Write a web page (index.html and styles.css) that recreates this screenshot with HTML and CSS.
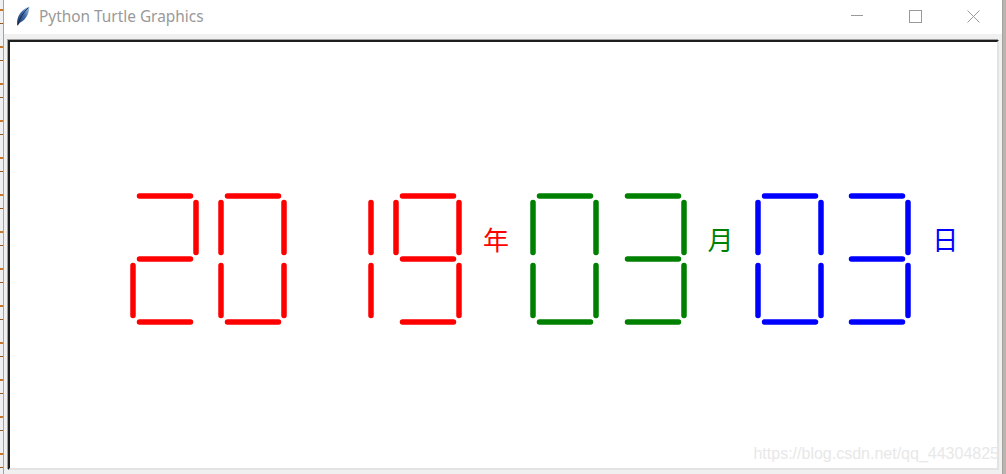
FILE: index.html
```html
<!DOCTYPE html>
<html>
<head>
<meta charset="utf-8">
<title>Python Turtle Graphics</title>
<link rel="stylesheet" href="styles.css">
</head>
<body>
<div class="screen">
  <div class="desk-left"></div>
  <div class="window">
    <div class="titlebar">
      <svg class="feather" width="14" height="20" viewBox="0 0 14 20">
        <defs>
          <linearGradient id="fg" x1="0" y1="1" x2="1" y2="0">
            <stop offset="0" stop-color="#1c3560"/>
            <stop offset="0.55" stop-color="#3d6aa8"/>
            <stop offset="1" stop-color="#a9c6ea"/>
          </linearGradient>
        </defs>
        <path d="M1.4 19.6 C0.2 12.5 3.6 4.2 13.4 0.6 C13.2 7.2 10.4 13.6 4.2 16.6 Z" fill="url(#fg)"/>
        <path d="M1.6 19.3 C3.8 12 7.2 6.2 12.2 1.8" stroke="#0c1a33" stroke-width="0.8" fill="none"/>
      </svg>
      <span class="title">Python Turtle Graphics</span>
      <div class="controls">
        <div class="btn"><svg width="12" height="12" viewBox="0 0 12 12"><path d="M0 5.5 H12" stroke="#999" stroke-width="1"/></svg></div>
        <div class="btn"><svg width="13" height="13" viewBox="0 0 13 13"><rect x="0.5" y="0.5" width="12" height="12" fill="none" stroke="#999" stroke-width="1"/></svg></div>
        <div class="btn"><svg width="13" height="13" viewBox="0 0 13 13"><path d="M0.5 0.5 L12.5 12.5 M12.5 0.5 L0.5 12.5" stroke="#999" stroke-width="1"/></svg></div>
      </div>
    </div>
    <div class="client">
      <div class="canvas">
        <div class="clock">
          <!-- 2 -->
          <svg class="digit red" viewBox="-3 -3 69 132">
            <path d="M6.5 0 H57.5 M63 6.5 V56.5 M6.5 63 H57.5 M0 69.5 V119.5 M6.5 126 H57.5"/>
          </svg>
          <!-- 0 -->
          <svg class="digit red" viewBox="-3 -3 69 132">
            <path d="M6.5 0 H57.5 M63 6.5 V56.5 M63 69.5 V119.5 M6.5 126 H57.5 M0 69.5 V119.5 M0 6.5 V56.5"/>
          </svg>
          <!-- 1 -->
          <svg class="digit red" viewBox="-3 -3 69 132">
            <path d="M63 6.5 V56.5 M63 69.5 V119.5"/>
          </svg>
          <!-- 9 -->
          <svg class="digit red" viewBox="-3 -3 69 132">
            <path d="M6.5 0 H57.5 M63 6.5 V56.5 M63 69.5 V119.5 M6.5 126 H57.5 M0 6.5 V56.5 M6.5 63 H57.5"/>
          </svg>
          <span class="char c-red">年</span>
          <!-- 0 -->
          <svg class="digit green" viewBox="-3 -3 69 132">
            <path d="M6.5 0 H57.5 M63 6.5 V56.5 M63 69.5 V119.5 M6.5 126 H57.5 M0 69.5 V119.5 M0 6.5 V56.5"/>
          </svg>
          <!-- 3 -->
          <svg class="digit green" viewBox="-3 -3 69 132">
            <path d="M6.5 0 H57.5 M63 6.5 V56.5 M6.5 63 H57.5 M63 69.5 V119.5 M6.5 126 H57.5"/>
          </svg>
          <span class="char c-green">月</span>
          <!-- 0 -->
          <svg class="digit blue" viewBox="-3 -3 69 132">
            <path d="M6.5 0 H57.5 M63 6.5 V56.5 M63 69.5 V119.5 M6.5 126 H57.5 M0 69.5 V119.5 M0 6.5 V56.5"/>
          </svg>
          <!-- 3 -->
          <svg class="digit blue" viewBox="-3 -3 69 132">
            <path d="M6.5 0 H57.5 M63 6.5 V56.5 M6.5 63 H57.5 M63 69.5 V119.5 M6.5 126 H57.5"/>
          </svg>
          <span class="char c-blue">日</span>
        </div>
        <div class="watermark">https://blog.csdn.net/qq_44304825</div>
      </div>
    </div>
  </div>
  <div class="desk-right"></div>
</div>
</body>
</html>
```
FILE: styles.css
```css
html, body {
  margin: 0;
  padding: 0;
  background: #f0f0f0;
}

.screen {
  width: 1006px;
  height: 474px;
  display: flex;
  overflow: hidden;
}

.desk-left {
  width: 3px;
  flex: none;
  background-color: #eef0f2;
  background-image: repeating-linear-gradient(to bottom, transparent 0 9px, #c8782a 9px 11px, transparent 11px 23px, #9a5a1e 23px 24px, transparent 24px 37px);
}

.desk-right {
  width: 3px;
  flex: none;
  background: #b9b4ac;
}

.window {
  width: 1000px;
  flex: none;
  display: flex;
  flex-direction: column;
  border-left: 1px solid #a3a3a3;
  border-right: 1px solid #a3a3a3;
  box-sizing: border-box;
  background: #f0f0f0;
}

.titlebar {
  height: 34px;
  flex: none;
  background: #ffffff;
  display: flex;
  align-items: center;
}

.feather {
  margin-left: 12px;
  margin-top: -2px;
  flex: none;
}

.title {
  margin-left: 9px;
  font-family: "Noto Sans", "Open Sans", sans-serif;
  font-size: 15.4px;
  color: #999999;
  margin-top: -2px;
}

.controls {
  margin-left: auto;
  display: flex;
  height: 34px;
}

.btn {
  width: 58px;
  height: 34px;
  display: flex;
  align-items: center;
  justify-content: center;
  padding-bottom: 2px;
  box-sizing: border-box;
}

.client {
  flex: 1;
  display: flex;
  flex-direction: column;
  padding: 6px 3px 4px 4px;
}

.canvas {
  position: relative;
  flex: 1;
  background: #ffffff;
  border-top: 2px solid #1e1e1e;
  border-left: 2px solid #1e1e1e;
  border-right: 2px solid #e3e3e3;
  border-bottom: 2px solid #e3e3e3;
  box-shadow: -1px -1px 0 #a0a0a0;
  padding: 151px 0 0 120px;
}

.clock {
  display: flex;
  align-items: flex-start;
  gap: 18.67px;
}

.digit {
  width: 69px;
  height: 132px;
  flex: none;
}

.digit path {
  fill: none;
  stroke-width: 5.5;
  stroke-linecap: round;
}

.digit.red path { stroke: #ff0000; }
.digit.green path { stroke: #008000; }
.digit.blue path { stroke: #0000ff; }

.char {
  width: 30.67px;
  flex: none;
  text-align: center;
  font-family: "Noto Sans CJK SC", sans-serif;
  font-size: 26px;
  line-height: 26px;
  margin-top: 33px;
}

.c-red { color: #ff0000; }
.c-green { color: #008000; }
.c-blue { color: #0000ff; }

.watermark {
  position: absolute;
  right: -2px;
  bottom: 6px;
  font-family: "Liberation Sans", Arial, sans-serif;
  font-size: 16px;
  line-height: 16px;
  color: #e8e8e8;
  white-space: nowrap;
}
```
